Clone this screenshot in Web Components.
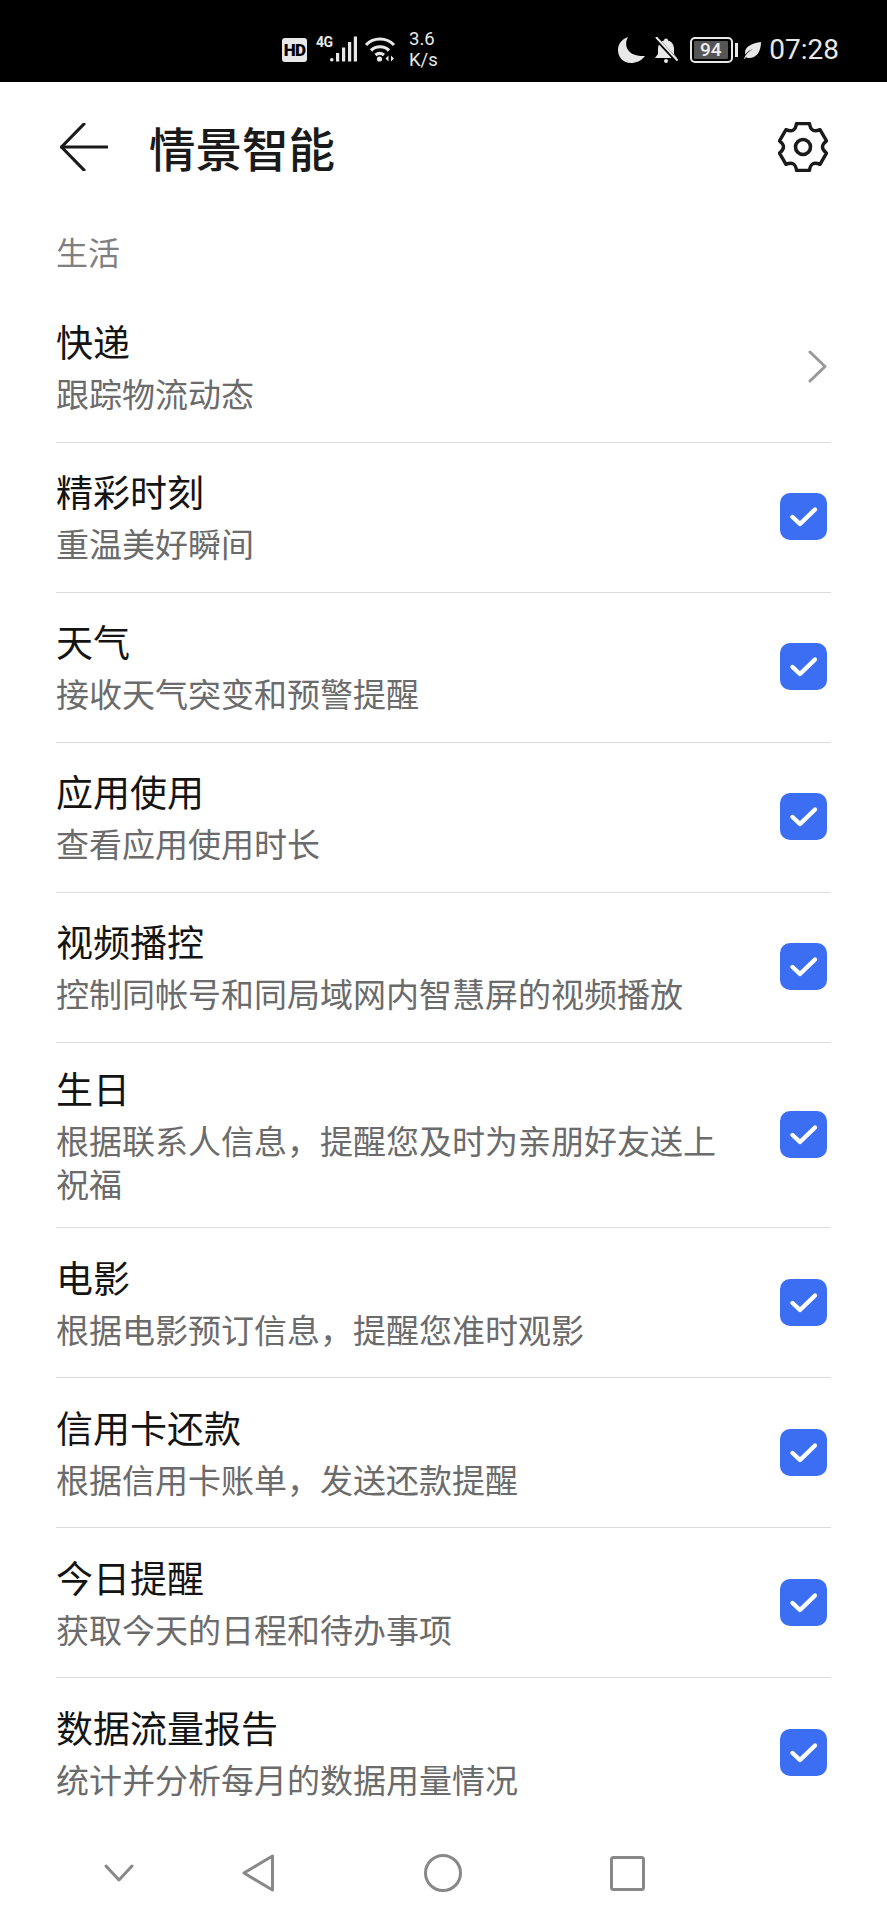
<!DOCTYPE html>
<html lang="zh">
<head>
<meta charset="utf-8">
<title>情景智能</title>
<style>
html, body { margin: 0; padding: 0; background: #fff; }
body { width: 887px; height: 1920px; overflow: hidden; font-family: "Noto Sans CJK SC", "Noto Sans", sans-serif; }
phone-page { height: 1920px; }
</style>
</head>
<body>
<phone-page>
  <status-bar slot="top"></status-bar>
  <app-header slot="top">情景智能</app-header>
  <section-label>生活</section-label>
  <setting-row control="chevron"><span slot="title">快递</span>跟踪物流动态</setting-row>
  <setting-row><span slot="title">精彩时刻</span>重温美好瞬间</setting-row>
  <setting-row><span slot="title">天气</span>接收天气突变和预警提醒</setting-row>
  <setting-row><span slot="title">应用使用</span>查看应用使用时长</setting-row>
  <setting-row><span slot="title">视频播控</span>控制同帐号和同局域网内智慧屏的视频播放</setting-row>
  <setting-row><span slot="title">生日</span>根据联系人信息，提醒您及时为亲朋好友送上祝福</setting-row>
  <setting-row><span slot="title">电影</span>根据电影预订信息，提醒您准时观影</setting-row>
  <setting-row><span slot="title">信用卡还款</span>根据信用卡账单，发送还款提醒</setting-row>
  <setting-row><span slot="title">今日提醒</span>获取今天的日程和待办事项</setting-row>
  <setting-row last><span slot="title">数据流量报告</span>统计并分析每月的数据用量情况</setting-row>
  <nav-bar slot="bottom"></nav-bar>
</phone-page>

<script>
class PhonePage extends HTMLElement {
  constructor() {
    super();
    this.attachShadow({ mode: "open" });
    this.shadowRoot.innerHTML = `
      <style>
        :host { display: flex; flex-direction: column; width: 887px; background: #fff; }
        #list { flex: 1; min-height: 0; overflow: hidden; padding: 0 56px; }
      </style>
      <slot name="top"></slot>
      <div id="list"><slot></slot></div>
      <slot name="bottom"></slot>`;
  }
}

class StatusBar extends HTMLElement {
  constructor() {
    super();
    this.attachShadow({ mode: "open" });
    this.shadowRoot.innerHTML = `
      <style>
        :host { display: flex; align-items: center; height: 82px; padding: 0 48px 0 282px; background: #000; color: #e8e8e8; font-family: Roboto, "Liberation Sans", sans-serif; }
        svg { display: block; flex: none; }
        .hd { width: 25px; height: 24px; border-radius: 3px; background: #e8e8e8; color: #000; font-size: 17px; font-weight: 900; line-height: 24px; text-align: center; margin-top: 18px; letter-spacing: -0.6px; }
        .net { position: relative; width: 41px; height: 26px; margin: 16px 8px 0 9px; }
        .net b { position: absolute; left: 0; top: 0; font-size: 14px; line-height: 13px; font-weight: 700; letter-spacing: -0.6px; }
        .net svg { position: absolute; left: 14px; top: 0; }
        .speed { font-size: 18.5px; line-height: 21px; margin: 17px 0 0 13px; width: 33px; }
        .speed div { white-space: nowrap; }
        .right { display: flex; align-items: center; margin-left: auto; margin-top: 18px; }
        .batt { box-sizing: border-box; width: 43px; height: 26px; border: 2px solid #e8e8e8; border-radius: 5px; padding: 1.5px 3.5px 2px 1.5px; margin-left: 12px; }
        .batt span { display: block; height: 18px; background: #555; border-radius: 1px; color: #eee; font-size: 19px; font-weight: 500; line-height: 18px; text-align: center; }
        .term { width: 3px; height: 14px; background: #e8e8e8; margin-left: 2px; }
        .time { font-size: 28px; line-height: 32px; margin-left: 8px; white-space: nowrap; }
      </style>
      <div class="hd">HD</div>
      <div class="net"><b>4G</b>
        <svg width="27" height="26" viewBox="0 0 27 26" fill="#e8e8e8"><circle cx="1.8" cy="23.7" r="1.8"/><rect x="6" y="17" width="3.2" height="8.5"/><rect x="12" y="11.5" width="3.2" height="14"/><rect x="18" y="6" width="3.2" height="19.5"/><rect x="23.8" y="0.5" width="3.2" height="25"/></svg>
      </div>
      <svg style="margin-top:16px" width="31" height="26" viewBox="0 0 31 26" fill="none" stroke="#e8e8e8" stroke-width="3.2"><path d="M1 9 C 8.5 1 21.5 1 29 9"/><path d="M6 14.5 C 11 9.5 19 9.5 24 14.5"/><path d="M10.5 19 C 13 17 16.5 17 19 19"/><circle cx="14.5" cy="23" r="2.6" fill="#e8e8e8" stroke="none"/><path d="M23.5 19.5 v6 l-3 -3 z M26 19.5 v6 l3 -3 z" fill="#e8e8e8" stroke="none"/></svg>
      <div class="speed"><div>3.6</div><div>K/s</div></div>
      <div class="right">
        <svg width="27" height="26" viewBox="0 0 27 26" fill="#e8e8e8"><path d="M10 0 C 5 9 10 20 27 19 C 23 24 18 26 13 26 C 5 26 0 20 0 13 C 0 7 4 2 10 0 Z"/></svg>
        <svg style="margin-left:9px" width="24" height="26" viewBox="0 0 24 26" fill="#e8e8e8"><path d="M12 1.5 a2 2 0 0 1 2 2 C 18 4.5 20 8 20 12 L20 17 L23 21 L1 21 L4 17 L4 12 C4 8 6 4.5 10 3.5 A2 2 0 0 1 12 1.5 Z"/><circle cx="12" cy="24" r="2"/><path d="M1 0.5 L23 24" stroke="#000" stroke-width="4"/><path d="M2 0 L23.5 23.5" stroke="#e8e8e8" stroke-width="2"/></svg>
        <div class="batt"><span>94</span></div>
        <div class="term"></div>
        <svg style="margin-left:6px" width="17" height="17" viewBox="0 0 17 17"><path fill="#e8e8e8" d="M17 0 C 17 9 13 16 5 16 C 3.5 16 2.5 15.6 2 15 L0.8 17 L0 16.5 C 1.5 12.5 5 9 9 7 C 5.5 8 3 10 1.5 12.5 C -1 6 7 1 17 0 Z"/></svg>
        <div class="time">07:28</div>
      </div>`;
  }
}

// six lobed gear, one lobe straight up, drawn around (25,25)
function gearPath() {
  const pt = (deg, r, off) => {
    const a = deg * Math.PI / 180;
    const x = 25 + r * Math.sin(a) + off * Math.cos(a);
    const y = 25 - r * Math.cos(a) + off * Math.sin(a);
    return x.toFixed(2) + " " + y.toFixed(2);
  };
  let d = "M" + pt(0, 23.4, -6.5);
  for (let k = 0; k < 6; k++) {
    const a = k * 60;
    d += " L" + pt(a, 23.4, 6.5);
    d += " Q" + pt(a + 30, 15.5, 0) + " " + pt(a + 60, 23.4, -6.5);
  }
  return d + " Z";
}

class AppHeader extends HTMLElement {
  constructor() {
    super();
    this.attachShadow({ mode: "open" });
    this.shadowRoot.innerHTML = `
      <style>
        :host { display: flex; align-items: center; box-sizing: border-box; height: 132px; padding: 0 59.5px 2px 60px; color: #1a1a1a; }
        svg { display: block; flex: none; }
        #t { flex: 1; margin-left: 41px; font-size: 46.5px; line-height: 60px; font-weight: 500; }
      </style>
      <svg width="48" height="48" viewBox="0 0 48 48" fill="none" stroke="#1a1a1a" stroke-width="3.2" stroke-linecap="round" stroke-linejoin="round"><path d="M24 1 L1.5 24 L24 47"/><path d="M1.5 24 H47"/></svg>
      <div id="t"><slot></slot></div>
      <svg width="50" height="50" viewBox="0 0 50 50" fill="none" stroke="#1a1a1a" stroke-width="3.4" stroke-linejoin="round"><path d="${gearPath()}"/><circle cx="25" cy="25" r="7.5" stroke-width="3.6"/></svg>`;
  }
}

class SectionLabel extends HTMLElement {
  constructor() {
    super();
    this.attachShadow({ mode: "open" });
    this.shadowRoot.innerHTML = `
      <style>
        :host { display: block; height: 78.5px; box-sizing: border-box; padding-top: 15px; font-size: 32px; line-height: 44px; color: #808080; }
      </style>
      <slot></slot>`;
  }
}

class CheckBox extends HTMLElement {
  constructor() {
    super();
    this.attachShadow({ mode: "open" });
    this.shadowRoot.innerHTML = `
      <style>
        :host { display: block; width: 47px; height: 47px; border-radius: 10px; background: #3b6ef2; }
        svg { display: block; }
      </style>
      <svg width="47" height="47" viewBox="0 0 47 47" fill="none" stroke="#fff" stroke-width="4.4" stroke-linecap="round" stroke-linejoin="round"><path d="M12.5 24 L20 31 L35 16.5"/></svg>`;
  }
}

class SettingRow extends HTMLElement {
  constructor() {
    super();
    this.attachShadow({ mode: "open" });
    const control = this.getAttribute("control") === "chevron"
      ? `<svg width="19" height="33" viewBox="0 0 19 33" fill="none" stroke="#999" stroke-width="3" stroke-linecap="round" stroke-linejoin="round"><path d="M2 2 L17 16.5 L2 31"/></svg>`
      : `<check-box></check-box>`;
    this.shadowRoot.innerHTML = `
      <style>
        :host { display: flex; align-items: center; box-sizing: border-box; min-height: 150px; padding: 19px 0 22.5px; border-bottom: 1.5px solid #dcdcdc; }
        :host([last]) { border-bottom: none; }
        #text { flex: 1; min-width: 0; padding-right: 40px; }
        #title { font-size: 37px; line-height: 52px; color: #141414; margin-bottom: 5px; }
        #sub { font-size: 33px; line-height: 43px; color: #6b6b6b; }
        #ctl { flex: none; display: flex; justify-content: flex-end; margin: 3px 4px 0 0; }
        svg { display: block; }
      </style>
      <div id="text">
        <div id="title"><slot name="title"></slot></div>
        <div id="sub"><slot></slot></div>
      </div>
      <div id="ctl">${control}</div>`;
  }
}

class NavBar extends HTMLElement {
  constructor() {
    super();
    this.attachShadow({ mode: "open" });
    this.shadowRoot.innerHTML = `
      <style>
        :host { display: flex; align-items: center; box-sizing: border-box; height: 92px; padding: 0 0 2px 104px; background: #fff; }
        svg { display: block; flex: none; }
      </style>
      <svg width="30" height="18" viewBox="0 0 30 18" fill="none" stroke="#888" stroke-width="3" stroke-linecap="round" stroke-linejoin="round"><path d="M2 2 L15 16 L28 2"/></svg>
      <svg style="margin-left:108px" width="32" height="38" viewBox="0 0 32 38" fill="none" stroke="#888" stroke-width="3" stroke-linejoin="round"><path d="M30.5 2 V36 L2 19 Z"/></svg>
      <svg style="margin-left:150px" width="38" height="38" viewBox="0 0 38 38" fill="none" stroke="#888" stroke-width="3"><circle cx="19" cy="19" r="17.5"/></svg>
      <svg style="margin-left:148px" width="35" height="35" viewBox="0 0 35 35" fill="none" stroke="#888" stroke-width="3" stroke-linejoin="round"><rect x="1.5" y="1.5" width="32" height="32" rx="2"/></svg>`;
  }
}

customElements.define("phone-page", PhonePage);
customElements.define("status-bar", StatusBar);
customElements.define("app-header", AppHeader);
customElements.define("section-label", SectionLabel);
customElements.define("check-box", CheckBox);
customElements.define("setting-row", SettingRow);
customElements.define("nav-bar", NavBar);
</script>
</body>
</html>
